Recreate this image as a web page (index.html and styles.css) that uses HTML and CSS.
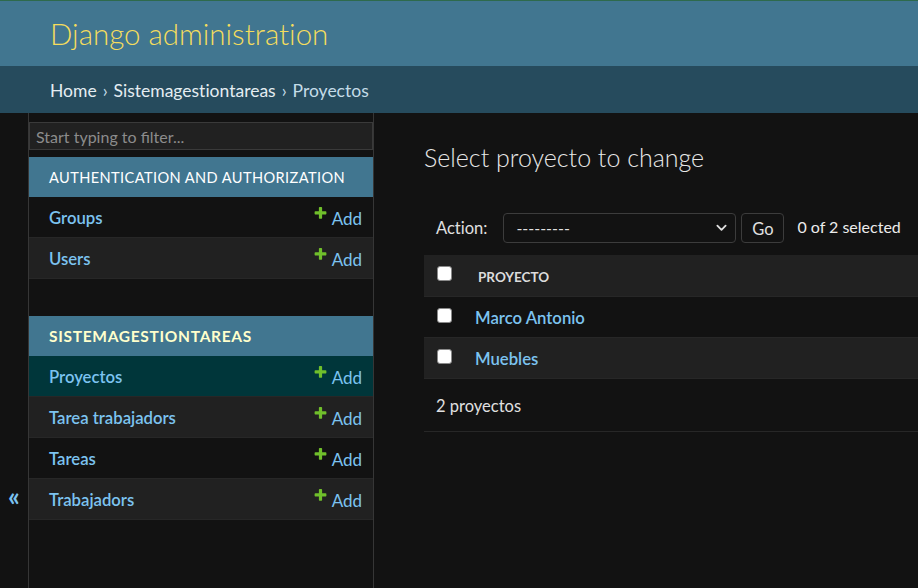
FILE: index.html
```html
<!DOCTYPE html>
<html lang="en">
<head>
<meta charset="utf-8">
<title>Select proyecto to change | Django site admin</title>
<link rel="stylesheet" href="styles.css">
</head>
<body>
<header class="header">
  <div class="brand">Django administration</div>
</header>
<nav class="breadcrumbs">
  <a href="#">Home</a><span class="sep">›</span><a href="#">Sistemagestiontareas</a><span class="sep">›</span><span class="crumb-current">Proyectos</span>
</nav>
<div class="main">
  <div class="toggle"><span class="toggle-glyph">«</span></div>
  <aside class="sidebar">
    <input class="filter" type="search" placeholder="Start typing to filter...">
    <div class="module">
      <div class="caption">Authentication and Authorization</div>
      <div class="row row-odd"><a class="model" href="#">Groups</a><a class="add" href="#"><svg class="plus" viewBox="0 0 1792 1792"><path d="M1600 736v192q0 40-28 68t-68 28h-416v416q0 40-28 68t-68 28h-192q-40 0-68-28t-28-68v-416h-416q-40 0-68-28t-28-68v-192q0-40 28-68t68-28h416v-416q0-40 28-68t68-28h192q40 0 68 28t28 68v416h416q40 0 68 28t28 68z"/></svg>Add</a></div>
      <div class="row row-even"><a class="model" href="#">Users</a><a class="add" href="#"><svg class="plus" viewBox="0 0 1792 1792"><path d="M1600 736v192q0 40-28 68t-68 28h-416v416q0 40-28 68t-68 28h-192q-40 0-68-28t-28-68v-416h-416q-40 0-68-28t-28-68v-192q0-40 28-68t68-28h416v-416q0-40 28-68t68-28h192q40 0 68 28t28 68v416h416q40 0 68 28t28 68z"/></svg>Add</a></div>
    </div>
    <div class="module current-app">
      <div class="caption">Sistemagestiontareas</div>
      <div class="row current-model"><a class="model" href="#">Proyectos</a><a class="add" href="#"><svg class="plus" viewBox="0 0 1792 1792"><path d="M1600 736v192q0 40-28 68t-68 28h-416v416q0 40-28 68t-68 28h-192q-40 0-68-28t-28-68v-416h-416q-40 0-68-28t-28-68v-192q0-40 28-68t68-28h416v-416q0-40 28-68t68-28h192q40 0 68 28t28 68v416h416q40 0 68 28t28 68z"/></svg>Add</a></div>
      <div class="row row-even"><a class="model" href="#">Tarea trabajadors</a><a class="add" href="#"><svg class="plus" viewBox="0 0 1792 1792"><path d="M1600 736v192q0 40-28 68t-68 28h-416v416q0 40-28 68t-68 28h-192q-40 0-68-28t-28-68v-416h-416q-40 0-68-28t-28-68v-192q0-40 28-68t68-28h416v-416q0-40 28-68t68-28h192q40 0 68 28t28 68v416h416q40 0 68 28t28 68z"/></svg>Add</a></div>
      <div class="row row-odd"><a class="model" href="#">Tareas</a><a class="add" href="#"><svg class="plus" viewBox="0 0 1792 1792"><path d="M1600 736v192q0 40-28 68t-68 28h-416v416q0 40-28 68t-68 28h-192q-40 0-68-28t-28-68v-416h-416q-40 0-68-28t-28-68v-192q0-40 28-68t68-28h416v-416q0-40 28-68t68-28h192q40 0 68 28t28 68v416h416q40 0 68 28t28 68z"/></svg>Add</a></div>
      <div class="row row-even"><a class="model" href="#">Trabajadors</a><a class="add" href="#"><svg class="plus" viewBox="0 0 1792 1792"><path d="M1600 736v192q0 40-28 68t-68 28h-416v416q0 40-28 68t-68 28h-192q-40 0-68-28t-28-68v-416h-416q-40 0-68-28t-28-68v-192q0-40 28-68t68-28h416v-416q0-40 28-68t68-28h192q40 0 68 28t28 68v416h416q40 0 68 28t28 68z"/></svg>Add</a></div>
    </div>
  </aside>
  <section class="content">
    <h1 class="title">Select proyecto to change</h1>
    <div class="changelist">
      <div class="actions">
        <span class="action-label">Action:</span>
        <div class="select"><span class="select-value">---------</span><svg class="chevron" viewBox="0 0 12 8"><path d="M1.5 1.5 6 6l4.5-4.5" fill="none" stroke="#e0e0e0" stroke-width="2" stroke-linecap="round" stroke-linejoin="round"/></svg></div>
        <button class="go" type="button">Go</button>
        <span class="counter">0 of 2 selected</span>
      </div>
      <table class="result-list">
        <thead>
          <tr><th class="check-col"><input class="check" type="checkbox"></th><th class="text-col"><span class="th-text">Proyecto</span></th></tr>
        </thead>
        <tbody>
          <tr class="tr-odd"><td class="check-col"><input class="check" type="checkbox"></td><th class="text-col body-text"><a class="obj" href="#">Marco Antonio</a></th></tr>
          <tr class="tr-even"><td class="check-col"><input class="check" type="checkbox"></td><th class="text-col body-text"><a class="obj" href="#">Muebles</a></th></tr>
        </tbody>
      </table>
      <p class="paginator">2 proyectos</p>
    </div>
  </section>
</div>
</body>
</html>
```

FILE: styles.css
```css
html, body {
  margin: 0;
  padding: 0;
}
body {
  background: #121212;
  color: #e0e0e0;
  font-family: "Lato", "Open Sans", "Liberation Sans", sans-serif;
  font-size: 16px;
  font-variant-ligatures: none;
  overflow: hidden;
  height: 588px;
}
a {
  text-decoration: none;
}

/* Header */
.header {
  height: 65px;
  border-top: 1px solid #2e6a4c;
  background: #417690;
  display: flex;
  align-items: center;
  padding: 0 50px;
}
.brand {
  color: #f5dd5d;
  font-size: 29.5px;
  font-weight: 300;
  line-height: 36px;
}

/* Breadcrumbs */
.breadcrumbs {
  height: 47px;
  background: #264b5d;
  display: flex;
  align-items: center;
  padding: 2px 50px 0;
  box-sizing: border-box;
  font-size: 17.5px;
  color: #c4dce8;
}
.breadcrumbs a {
  color: #e4edf2;
}
.sep {
  margin: 0 6px;
}
.crumb-current {
  color: #c4dce8;
}

/* Main */
.main {
  display: flex;
  height: 475px;
}
.toggle {
  flex: 0 0 29px;
  box-sizing: border-box;
  border-right: 1px solid #363636;
  display: flex;
  justify-content: center;
  padding-top: 370px;
}
.toggle-glyph {
  color: #7cc3f0;
  font-size: 26px;
  font-weight: 700;
  line-height: 26px;
  height: 26px;
}
.sidebar {
  flex: 0 0 344px;
  border-right: 1px solid #363636;
}
.filter {
  display: block;
  box-sizing: border-box;
  width: 100%;
  height: 28px;
  margin: 9px 0 7px;
  padding: 0 6px;
  border: 1px solid #3a3a3a;
  background: #212121;
  color: #e0e0e0;
  font-family: inherit;
  font-size: 16px;
  outline: none;
}
.filter::placeholder {
  color: #8c8c8c;
}
.module {
  margin-bottom: 37px;
}
.caption {
  height: 40px;
  line-height: 41px;
  background: #417690;
  color: #ffffff;
  padding-left: 20px;
  text-transform: uppercase;
  font-size: 14.6px;
  letter-spacing: 0.4px;
}
.current-app .caption {
  color: #ffffcc;
  font-weight: 700;
  font-size: 15.5px;
  letter-spacing: 0.7px;
}
.row {
  height: 38px;
  border-bottom: 1px solid #272727;
  display: flex;
  align-items: center;
  justify-content: space-between;
  padding: 2px 11px 0 20px;
  box-sizing: content-box;
}
.row-odd {
  background: #121212;
}
.row-even {
  background: #212121;
}
.current-model {
  background: #00363a;
}
.model {
  color: #7cc3f0;
  font-weight: 600;
  font-size: 16.7px;
}
.add {
  color: #7cc3f0;
  font-size: 17px;
  display: flex;
  align-items: flex-start;
}
.plus {
  width: 15px;
  height: 15px;
  fill: #70bf2b;
  margin-right: 4px;
  margin-top: -2px;
}

/* Content */
.content {
  flex: 1;
  padding: 29px 0 0 50px;
  min-width: 0;
}
.title {
  margin: 0;
  font-size: 25px;
  font-weight: 300;
  line-height: 30px;
  color: #e8e8e8;
}
.changelist {
  margin-top: 28px;
}
.actions {
  height: 55px;
  display: flex;
  align-items: center;
  padding: 0 12px;
  color: #e0e0e0;
}
.action-label {
  font-size: 16.5px;
}
.select {
  box-sizing: border-box;
  margin-left: 16px;
  width: 233px;
  height: 30px;
  border: 1px solid #3c3c3c;
  border-radius: 4px;
  background: #121212;
  display: flex;
  align-items: center;
  justify-content: space-between;
  padding: 0 8px 0 12px;
  font-size: 16px;
}
.chevron {
  width: 11px;
  height: 8px;
}
.go {
  box-sizing: border-box;
  margin-left: 5px;
  width: 43px;
  height: 30px;
  border: 1px solid #3c3c3c;
  border-radius: 4px;
  background: #121212;
  color: #e0e0e0;
  font-family: inherit;
  font-size: 16.5px;
  padding: 2px 0 0;
}
.counter {
  margin-left: 13px;
  font-size: 16px;
  color: #ececec;
  margin-top: -3px;
}
.result-list {
  width: 100%;
  border-collapse: collapse;
}
.result-list tr {
  height: 41px;
}
.result-list th,
.result-list td {
  border-bottom: 1px solid #272727;
  padding: 0;
  text-align: left;
  vertical-align: middle;
}
.result-list thead th {
  background: #212121;
}
.tr-odd {
  background: #121212;
}
.tr-even {
  background: #212121;
}
.check-col {
  width: 42px;
  padding-left: 13px !important;
  vertical-align: top !important;
  box-sizing: border-box;
}
.check {
  appearance: none;
  -webkit-appearance: none;
  display: block;
  width: 15px;
  height: 15px;
  margin: 11px 0 0;
  background: #ffffff;
  border: 1px solid #8a8a8a;
  border-radius: 3px;
  box-sizing: border-box;
}
.text-col {
  padding-left: 9px !important;
}
.body-text {
  padding-top: 3px !important;
}
.th-text {
  padding-left: 3px;
  font-size: 13.5px;
  font-weight: 700;
  text-transform: uppercase;
  color: #dcdcdc;
}
.obj {
  color: #7cc3f0;
  font-weight: 600;
  font-size: 16.7px;
}
.paginator {
  margin: 0;
  height: 52px;
  line-height: 55px;
  padding-left: 12px;
  border-bottom: 1px solid #272727;
  font-size: 16.5px;
  color: #e0e0e0;
}
```
